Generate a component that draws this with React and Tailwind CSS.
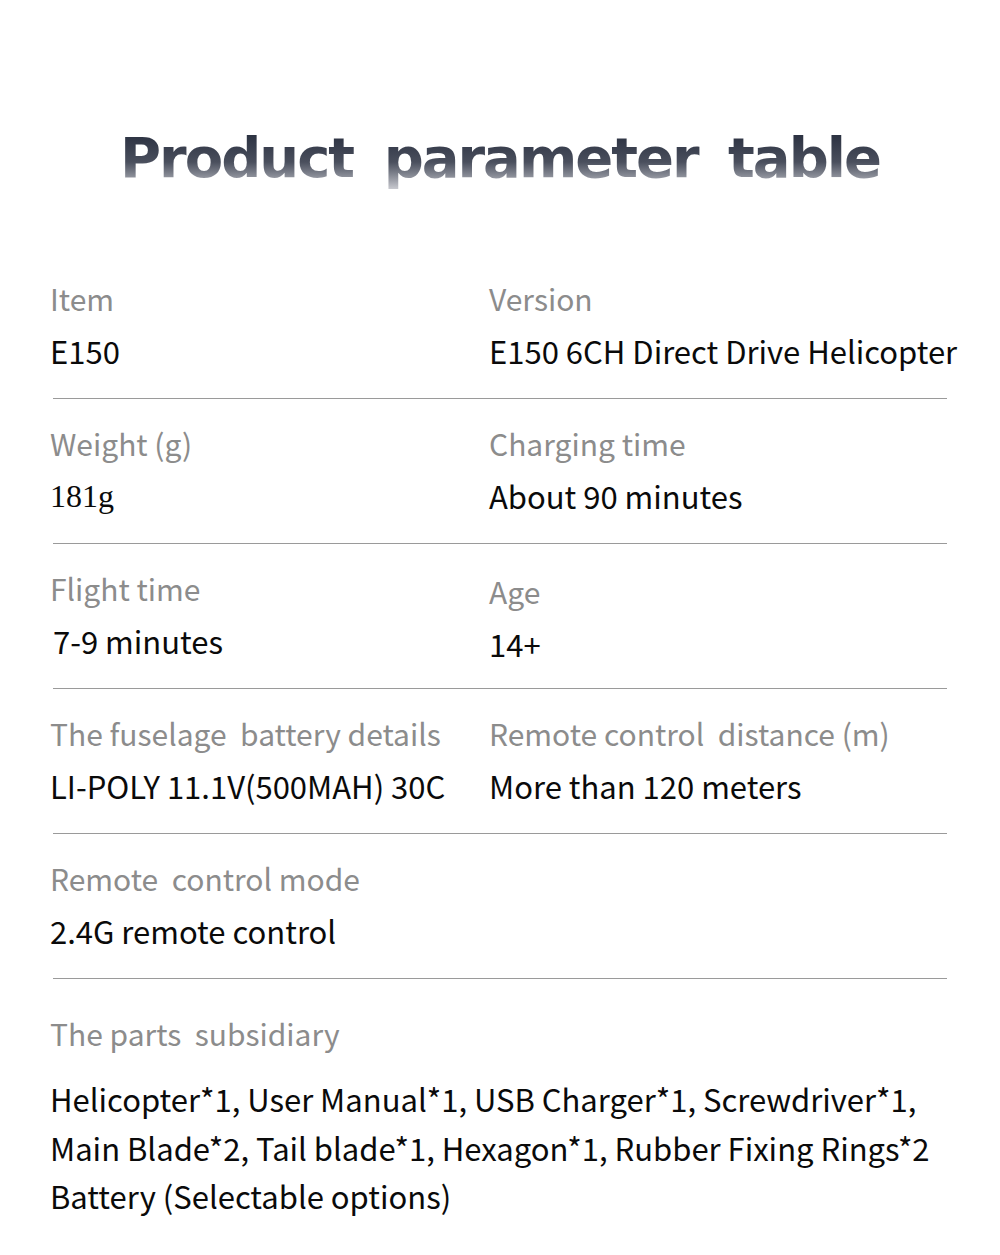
const sans = { fontFamily: '"Noto Sans CJK SC", "Noto Sans", sans-serif' };

const rows = [
    [
        { label: "Item", value: "E150" },
        { label: "Version", value: "E150 6CH Direct Drive Helicopter" },
    ],
    [
        { label: "Weight (g)", value: "181g", serif: true },
        { label: "Charging time", value: "About 90 minutes" },
    ],
    [
        { label: "Flight time", value: "7-9 minutes", nudge: true },
        { label: "Age", value: "14+", shift: true },
    ],
    [
        { label: "The fuselage  battery details", value: "LI-POLY 11.1V(500MAH) 30C" },
        { label: "Remote control  distance (m)", value: "More than 120 meters" },
    ],
    [
        { label: "Remote  control mode", value: "2.4G remote control" },
        null,
    ],
];

function Cell({ cell }) {
    if (!cell) return <div />;
    return (
        <div className={cell.shift ? "mt-[3px] -mb-[3px]" : ""}>
            <div className="text-[30px] leading-[46px] text-[#8c8c8c] whitespace-pre">{cell.label}</div>
            <div
                className={`leading-[60px] text-[#0a0a0a] whitespace-pre ${cell.serif ? "text-[32px]" : "text-[31px]"} ${cell.nudge ? "pl-[3px]" : ""}`}
                style={cell.serif ? { fontFamily: '"Liberation Serif", serif' } : undefined}
            >
                {cell.value}
            </div>
        </div>
    );
}

export default function App() {
    return (
        <div className="w-[1000px] h-[1255px] bg-white overflow-hidden" style={sans}>
            {/* Title */}
            <div className="pt-[130px] text-center">
                <span
                    className="inline-block text-[56px] leading-[56px] pb-[8px] font-bold tracking-[-2px] bg-clip-text text-transparent bg-gradient-to-b from-[#272d3d] via-[#4a4f5d] to-[#e2e2e6] whitespace-pre"
                    style={{ fontFamily: '"DejaVu Sans", sans-serif', wordSpacing: "13px" }}
                >
                    Product parameter table
                </span>
            </div>

            {/* Table */}
            <div className="mt-[60px] mx-[53px]">
                {rows.map((row, i) => (
                    <div key={i} className="pt-[21px] pb-[17px] border-b border-[#9a9a9a]">
                        <div className="grid grid-cols-[439px_1fr] -ml-[3px]">
                            <Cell cell={row[0]} />
                            <Cell cell={row[1]} />
                        </div>
                    </div>
                ))}

                <div className="pt-[31px] -ml-[3px]">
                    <div className="text-[30px] leading-[46px] text-[#8c8c8c] whitespace-pre">The parts  subsidiary</div>
                    <div className="mt-[19px] text-[31px] leading-[48.5px] text-[#0a0a0a] whitespace-nowrap">
                        Helicopter*1, User Manual*1, USB Charger*1, Screwdriver*1,
                        <br />
                        Main Blade*2, Tail blade*1, Hexagon*1, Rubber Fixing Rings*2
                        <br />
                        Battery (Selectable options)
                    </div>
                </div>
            </div>
        </div>
    );
}
